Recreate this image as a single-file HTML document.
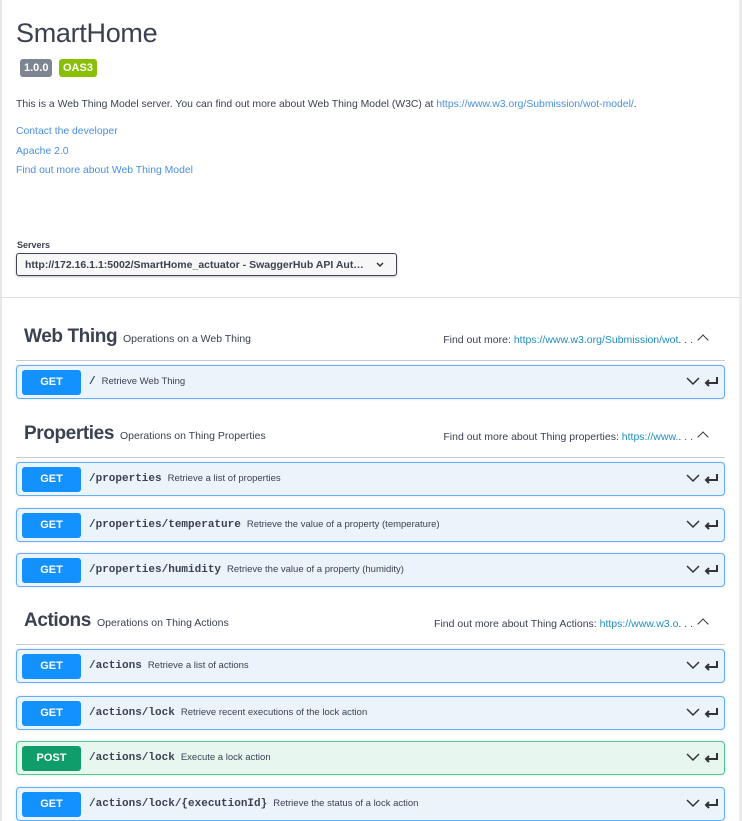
<!DOCTYPE html>
<html><head><meta charset="utf-8"><style>
*{box-sizing:border-box;margin:0;padding:0}
body{width:742px;height:821px;overflow:hidden;background:#fff;font-family:"Liberation Sans",Arial,sans-serif;color:#3b4151;position:relative}
.lb{position:absolute;left:0;top:0;width:2px;height:821px;background:#e8e8e8}
.rb{position:absolute;right:0;top:0;width:3px;height:821px;background:#ececec}
h1{position:absolute;left:16px;top:18px;font-size:27px;font-weight:400;color:#3b4151;letter-spacing:-0.3px}
.badge{position:absolute;top:59px;height:18px;font-size:11px;font-weight:700;color:#fff;padding:2px 4px;border-radius:3px;line-height:14px}
.p{position:absolute;left:16px;font-size:10.4px;color:#3b4151}
a{color:#4990e2;text-decoration:none}
.sl{position:absolute;left:17px;top:240px;font-size:9px;font-weight:700}
.sel{position:absolute;left:16px;top:253px;width:381px;height:23px;border:1px solid #41444e;border-radius:3px;font-size:10.5px;font-weight:700;padding:5px 8px;box-shadow:0 1px 2px rgba(0,0,0,.25);background:#f7f7f7;white-space:nowrap}
.sel svg{position:absolute;right:12px;top:8px}
.sep{position:absolute;left:0;top:297px;width:742px;height:1px;background:#e0e0e0}
.tag{position:absolute;left:16px;width:709px;height:40px;border-bottom:1px solid #c9cacd}
.tag b{position:absolute;left:8px;bottom:12px;font-size:19px;font-weight:700;letter-spacing:-0.4px}
.tag span.d{position:absolute;bottom:15px;font-size:10.5px}
.tag .r{position:absolute;right:32px;bottom:14px;font-size:10.5px}
.tag .r a{color:#1f8fc0}
.car{position:absolute;right:18px;bottom:16px;width:8px;height:8px;border-left:1.5px solid #333;border-top:1.5px solid #333;transform:rotate(45deg)}
.op{position:absolute;left:16px;width:709px;height:34px;border:1px solid #61affe;background:#ebf3fb;border-radius:4px;box-shadow:0 0 2px rgba(0,0,0,.15)}
.op.post{border-color:#49cc90;background:#e8f6f0}
.m{position:absolute;left:5px;top:4px;width:59px;height:25px;background:#1391ff;border-radius:3px;color:#fff;font-weight:700;font-size:11px;text-align:center;line-height:25px}
.post .m{background:#0f9d6b}
.path{position:absolute;left:72px;top:10px;font-family:"Liberation Mono",monospace;font-weight:700;font-size:11px;color:#3b4151}
.desc{font-family:"Liberation Sans",sans-serif;font-weight:400;font-size:9.5px;margin-left:6px}
.ic{position:absolute;right:4px;top:9px}
</style></head><body>
<div class="lb"></div><div class="rb"></div>
<h1>SmartHome</h1>
<div class="badge" style="left:20px;background:#7d8492">1.0.0</div>
<div class="badge" style="left:59px;background:#89bf04">OAS3</div>
<div class="p" style="top:99px">This is a Web Thing Model server. You can find out more about Web Thing Model (W3C) at <a>https://www.w3.org/Submission/wot-model/</a>.</div>
<div class="p" style="top:126px"><a>Contact the developer</a></div>
<div class="p" style="top:146px"><a>Apache 2.0</a></div>
<div class="p" style="top:165px"><a>Find out more about Web Thing Model</a></div>
<div class="sl">Servers</div>
<div class="sel">http://172.16.1.1:5002/SmartHome_actuator - SwaggerHub API Aut…<svg width="8" height="6"><path d="M1 1l3 3 3-3" stroke="#333" stroke-width="1.5" fill="none"/></svg></div>
<div class="sep"></div>

<div class="tag" style="top:321px"><b>Web Thing</b><span class="d" style="left:107px">Operations on a Web Thing</span><span class="r">Find out more: <a>https://www.w3.org/Submission/wot</a>. . .</span><div class="car"></div></div>
<div class="tag" style="top:418px"><b>Properties</b><span class="d" style="left:104px">Operations on Thing Properties</span><span class="r">Find out more about Thing properties: <a>https://www.</a>. . .</span><div class="car"></div></div>
<div class="tag" style="top:605px"><b>Actions</b><span class="d" style="left:81px">Operations on Thing Actions</span><span class="r">Find out more about Thing Actions: <a>https://www.w3.o</a>. . .</span><div class="car"></div></div>

<div class="op" style="top:365px"><div class="m">GET</div><div class="path">/<span class="desc">Retrieve Web Thing</span></div><svg class="ic" width="34" height="14"><path d="M1 3l6 6 6-6" stroke="#333" stroke-width="1.5" fill="none"/><path d="M31 2v6H20M23 5l-3 3 3 3" stroke="#333" stroke-width="2" fill="none"/></svg></div>
<div class="op" style="top:462px"><div class="m">GET</div><div class="path">/properties<span class="desc">Retrieve a list of properties</span></div><svg class="ic" width="34" height="14"><path d="M1 3l6 6 6-6" stroke="#333" stroke-width="1.5" fill="none"/><path d="M31 2v6H20M23 5l-3 3 3 3" stroke="#333" stroke-width="2" fill="none"/></svg></div>
<div class="op" style="top:508px"><div class="m">GET</div><div class="path">/properties/temperature<span class="desc">Retrieve the value of a property (temperature)</span></div><svg class="ic" width="34" height="14"><path d="M1 3l6 6 6-6" stroke="#333" stroke-width="1.5" fill="none"/><path d="M31 2v6H20M23 5l-3 3 3 3" stroke="#333" stroke-width="2" fill="none"/></svg></div>
<div class="op" style="top:553px"><div class="m">GET</div><div class="path">/properties/humidity<span class="desc">Retrieve the value of a property (humidity)</span></div><svg class="ic" width="34" height="14"><path d="M1 3l6 6 6-6" stroke="#333" stroke-width="1.5" fill="none"/><path d="M31 2v6H20M23 5l-3 3 3 3" stroke="#333" stroke-width="2" fill="none"/></svg></div>
<div class="op" style="top:649px"><div class="m">GET</div><div class="path">/actions<span class="desc">Retrieve a list of actions</span></div><svg class="ic" width="34" height="14"><path d="M1 3l6 6 6-6" stroke="#333" stroke-width="1.5" fill="none"/><path d="M31 2v6H20M23 5l-3 3 3 3" stroke="#333" stroke-width="2" fill="none"/></svg></div>
<div class="op" style="top:696px"><div class="m">GET</div><div class="path">/actions/lock<span class="desc">Retrieve recent executions of the lock action</span></div><svg class="ic" width="34" height="14"><path d="M1 3l6 6 6-6" stroke="#333" stroke-width="1.5" fill="none"/><path d="M31 2v6H20M23 5l-3 3 3 3" stroke="#333" stroke-width="2" fill="none"/></svg></div>
<div class="op post" style="top:741px"><div class="m">POST</div><div class="path">/actions/lock<span class="desc">Execute a lock action</span></div><svg class="ic" width="34" height="14"><path d="M1 3l6 6 6-6" stroke="#333" stroke-width="1.5" fill="none"/><path d="M31 2v6H20M23 5l-3 3 3 3" stroke="#333" stroke-width="2" fill="none"/></svg></div>
<div class="op" style="top:787px"><div class="m">GET</div><div class="path">/actions/lock/{executionId}<span class="desc">Retrieve the status of a lock action</span></div><svg class="ic" width="34" height="14"><path d="M1 3l6 6 6-6" stroke="#333" stroke-width="1.5" fill="none"/><path d="M31 2v6H20M23 5l-3 3 3 3" stroke="#333" stroke-width="2" fill="none"/></svg></div>
</body></html>
